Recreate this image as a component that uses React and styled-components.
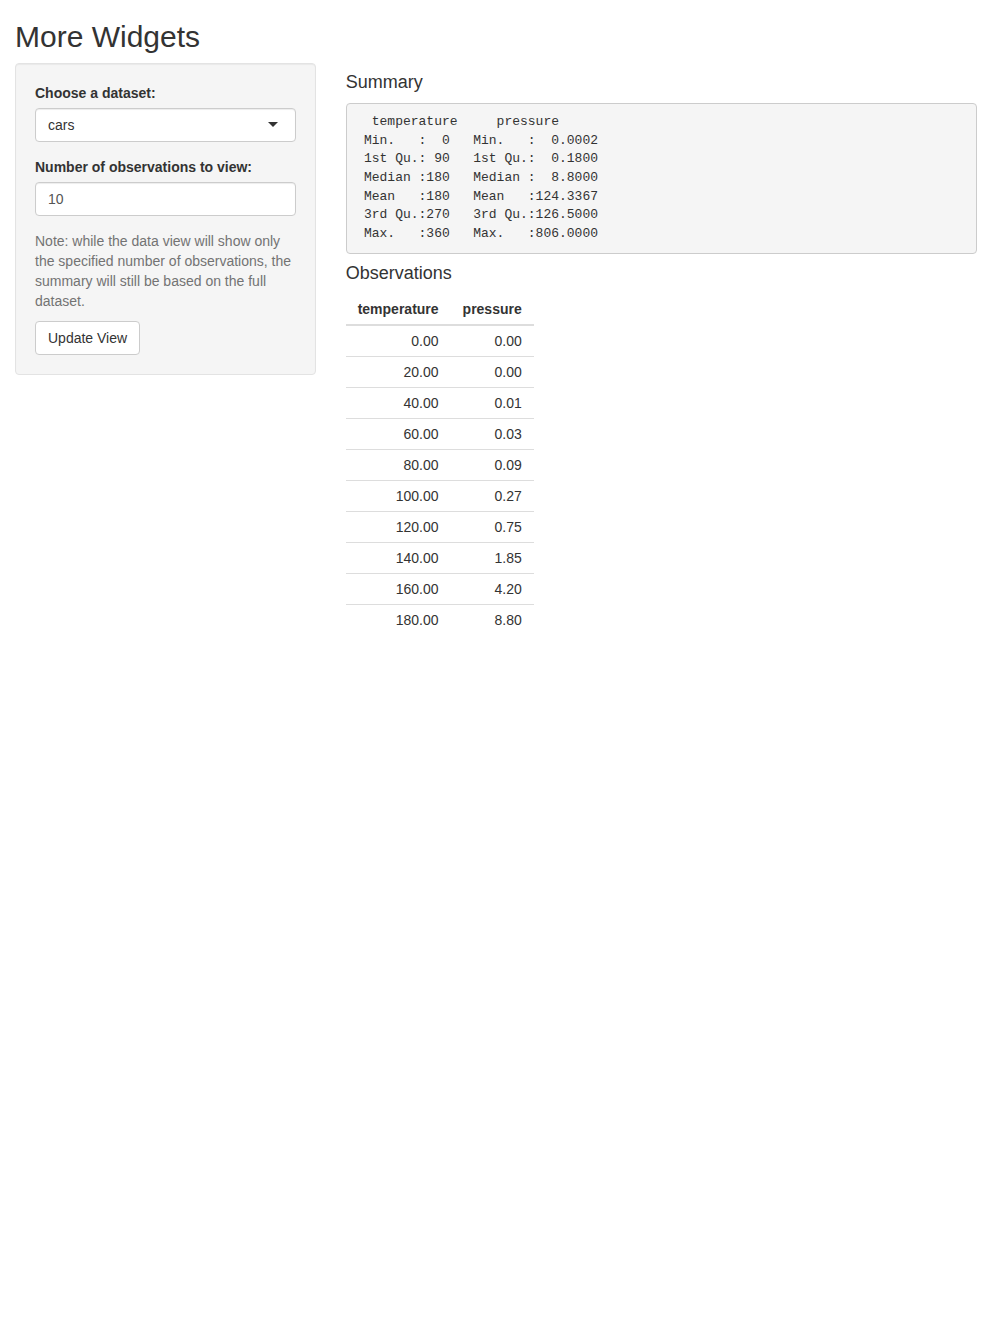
import React from "react";
import styled, { createGlobalStyle } from "styled-components";

const Global = createGlobalStyle`
  * { box-sizing: border-box; }
  html, body { margin: 0; padding: 0; background: #fff; }
  body {
    font-family: "Liberation Sans", Arial, Helvetica, sans-serif;
    font-size: 14px;
    line-height: 1.42857143;
    color: #333;
  }
`;

const Container = styled.div`
  padding: 0 15px;
`;

const Title = styled.h2`
  font-size: 30px;
  font-weight: 500;
  line-height: 1.1;
  margin: 20px 0 10px;
  color: #333;
`;

const Row = styled.div`
  display: flex;
  margin: 0 -15px;
`;

const Col = styled.div`
  flex: 0 0 ${(p) => p.$span * 100 / 12}%;
  max-width: ${(p) => p.$span * 100 / 12}%;
  padding: 0 15px;
`;

const Well = styled.div`
  min-height: 20px;
  padding: 19px;
  margin-bottom: 20px;
  background: #f5f5f5;
  border: 1px solid #e3e3e3;
  border-radius: 4px;
  box-shadow: inset 0 1px 1px rgba(0, 0, 0, 0.05);
`;

const FormGroup = styled.div`
  margin-bottom: 15px;
`;

const Label = styled.label`
  display: inline-block;
  max-width: 100%;
  margin-bottom: 5px;
  font-weight: 700;
`;

const SelectBox = styled.div`
  display: flex;
  align-items: center;
  justify-content: space-between;
  height: 34px;
  padding: 6px 12px;
  background: #fff;
  border: 1px solid #ccc;
  border-radius: 4px;
  box-shadow: inset 0 1px 1px rgba(0, 0, 0, 0.075);
  color: #333;
`;

const Caret = styled.span`
  width: 0;
  height: 0;
  margin: 0 5px 2px 0;
  border-style: solid;
  border-width: 5px 5px 0 5px;
  border-color: #333 transparent transparent transparent;
`;

const TextInput = styled.input`
  display: block;
  width: 100%;
  height: 34px;
  padding: 6px 12px;
  font-family: inherit;
  font-size: 14px;
  line-height: 1.42857143;
  color: #555;
  background: #fff;
  border: 1px solid #ccc;
  border-radius: 4px;
  box-shadow: inset 0 1px 1px rgba(0, 0, 0, 0.075);
  outline: none;
`;

const HelpText = styled.span`
  display: block;
  margin: 0 0 10px;
  color: #737373;
`;

const Button = styled.button`
  display: inline-block;
  padding: 6px 12px;
  font-family: inherit;
  font-size: 14px;
  line-height: 1.42857143;
  color: #333;
  background: #fff;
  border: 1px solid #ccc;
  border-radius: 4px;
  cursor: pointer;
`;

const SubTitle = styled.h4`
  font-size: 18px;
  font-weight: 500;
  line-height: 1.1;
  margin: 10px 0;
  color: #333;
`;

const Pre = styled.pre`
  display: block;
  margin: 0 0 10px;
  padding: 9.5px;
  font-family: "Liberation Mono", "Courier New", monospace;
  font-size: 13px;
  line-height: 1.42857143;
  color: #333;
  background: #f5f5f5;
  border: 1px solid #ccc;
  border-radius: 4px;
  white-space: pre;
  overflow: auto;
`;

const Table = styled.table`
  width: auto;
  margin-bottom: 20px;
  border-collapse: collapse;
  border-spacing: 0;
`;

const Th = styled.th`
  padding: 5px 12px;
  text-align: right;
  font-weight: 700;
  line-height: 1.42857143;
  border-bottom: 2px solid #ddd;
  vertical-align: bottom;
`;

const Td = styled.td`
  padding: 5px 12px;
  text-align: right;
  line-height: 1.42857143;
  border-top: ${(p) => (p.$first ? "none" : "1px solid #ddd")};
`;

const summary = `  temperature     pressure       
 Min.   :  0   Min.   :  0.0002  
 1st Qu.: 90   1st Qu.:  0.1800  
 Median :180   Median :  8.8000  
 Mean   :180   Mean   :124.3367  
 3rd Qu.:270   3rd Qu.:126.5000  
 Max.   :360   Max.   :806.0000  `;

const rows = [
  ["0.00", "0.00"],
  ["20.00", "0.00"],
  ["40.00", "0.01"],
  ["60.00", "0.03"],
  ["80.00", "0.09"],
  ["100.00", "0.27"],
  ["120.00", "0.75"],
  ["140.00", "1.85"],
  ["160.00", "4.20"],
  ["180.00", "8.80"],
];

export default function App() {
  return (
    <Container>
      <Global />
      <Title>More Widgets</Title>
      <Row>
        <Col $span={4}>
          <Well>
            <FormGroup>
              <Label>Choose a dataset:</Label>
              <SelectBox>
                <span>cars</span>
                <Caret />
              </SelectBox>
            </FormGroup>
            <FormGroup>
              <Label>Number of observations to view:</Label>
              <TextInput type="text" defaultValue="10" />
            </FormGroup>
            <HelpText>
              Note: while the data view will show only the specified number of
              observations, the summary will still be based on the full dataset.
            </HelpText>
            <Button>Update View</Button>
          </Well>
        </Col>
        <Col $span={8}>
          <SubTitle>Summary</SubTitle>
          <Pre>{summary}</Pre>
          <SubTitle>Observations</SubTitle>
          <Table>
            <thead>
              <tr>
                <Th>temperature</Th>
                <Th>pressure</Th>
              </tr>
            </thead>
            <tbody>
              {rows.map((r, i) => (
                <tr key={i}>
                  <Td $first={i === 0}>{r[0]}</Td>
                  <Td $first={i === 0}>{r[1]}</Td>
                </tr>
              ))}
            </tbody>
          </Table>
        </Col>
      </Row>
    </Container>
  );
}
